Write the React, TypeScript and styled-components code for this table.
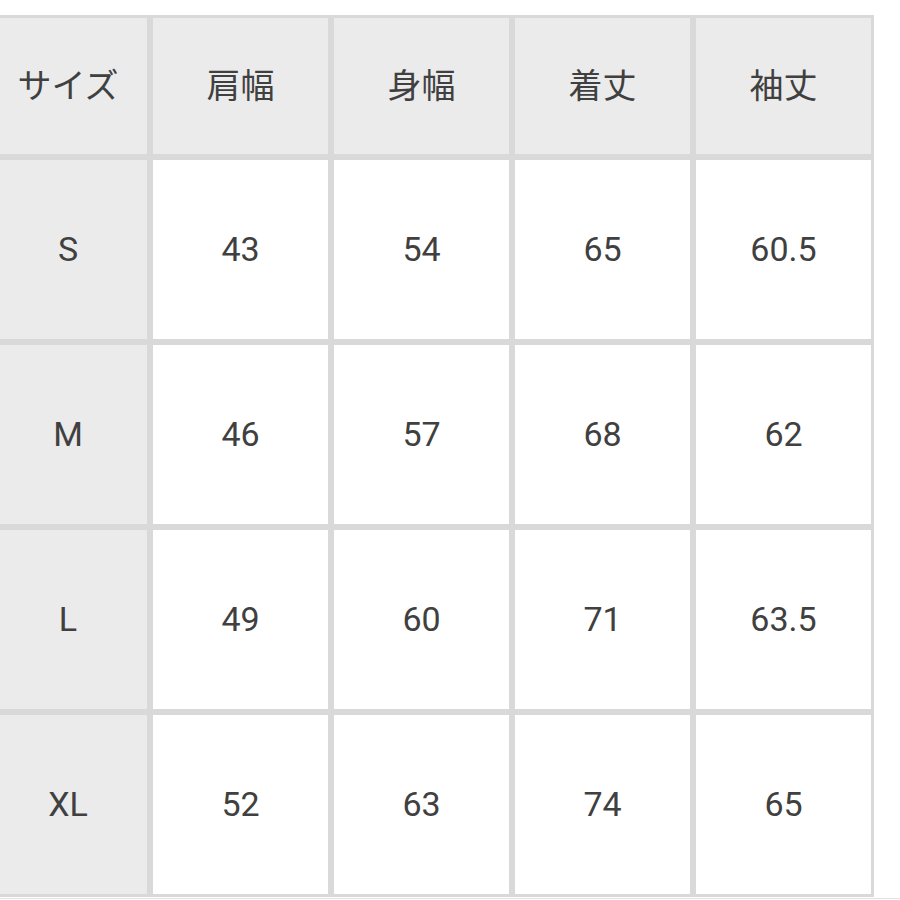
import React from "react";
import styled, { createGlobalStyle } from "styled-components";

const GlobalStyle = createGlobalStyle`
  html, body {
    margin: 0;
    padding: 0;
    background: #fff;
    overflow: hidden;
  }
  body {
    font-family: Roboto, "Noto Sans CJK JP", sans-serif;
  }
`;

const Page = styled.div`
  width: 900px;
  height: 900px;
  padding-top: 15px;
  box-sizing: border-box;
  overflow: hidden;
`;

const SizeGrid = styled.div`
  display: grid;
  grid-template-columns: 158px repeat(4, 175px);
  grid-template-rows: 136px repeat(4, 179px);
  gap: 6px;
  width: max-content;
  margin-left: -14px;
  border: 3px solid #d9d9d9;
  background: #d9d9d9;
`;

const Cell = styled.div<{ $shaded?: boolean; $jp?: boolean }>`
  display: flex;
  align-items: center;
  justify-content: center;
  box-sizing: border-box;
  padding-bottom: ${(p) => (p.$jp ? "5px" : "2px")};
  background: ${(p) => (p.$shaded ? "#ebebeb" : "#ffffff")};
  color: #404040;
  font-family: ${(p) =>
    p.$jp ? `"Noto Sans CJK JP", sans-serif` : `Roboto, "Noto Sans CJK JP", sans-serif`};
  font-size: 34px;
  font-weight: 400;
  line-height: 1;
`;

const Rule = styled.div`
  height: 1px;
  margin-top: 1px;
  background: #e2e2e2;
`;

const headers = ["サイズ", "肩幅", "身幅", "着丈", "袖丈"];

const rows: [string, string, string, string, string][] = [
  ["S", "43", "54", "65", "60.5"],
  ["M", "46", "57", "68", "62"],
  ["L", "49", "60", "71", "63.5"],
  ["XL", "52", "63", "74", "65"],
];

export default function App() {
  return (
    <>
      <GlobalStyle />
      <Page>
        <SizeGrid>
          {headers.map((h) => (
            <Cell key={h} $shaded $jp>
              {h}
            </Cell>
          ))}
          {rows.map((r) =>
            r.map((v, i) => (
              <Cell key={r[0] + i} $shaded={i === 0}>
                {v}
              </Cell>
            ))
          )}
        </SizeGrid>
        <Rule />
      </Page>
    </>
  );
}
